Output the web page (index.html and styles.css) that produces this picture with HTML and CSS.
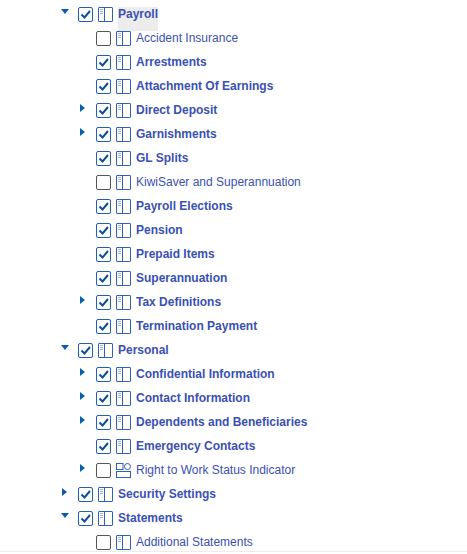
FILE: index.html
```html
<!DOCTYPE html>
<html lang="en">
<head>
<meta charset="utf-8">
<title>Payroll tree</title>
<link rel="stylesheet" href="styles.css">
</head>
<body>
<svg class="defs" width="0" height="0" aria-hidden="true">
  <symbol id="page" viewBox="0 0 15 15">
    <rect x=".5" y=".5" width="14" height="14" rx=".5" fill="#fff" stroke="#2f5fc0"/>
    <path d="M6.500 .5V14.500" fill="none" stroke="#2f5fc0"/>
    <path d="M2 2.500h3M2 4.500h3M2 6.500h3" fill="none" stroke="#9fb0e2"/>
  </symbol>
  <symbol id="shapes" viewBox="0 0 15 15">
    <rect x=".5" y=".5" width="6.500" height="6" fill="#fff" stroke="#2f5fc0"/>
    <circle cx="11.500" cy="3.500" r="3" fill="#fff" stroke="#2f5fc0"/>
    <rect x=".5" y="8.500" width="14" height="6" fill="#fff" stroke="#2f5fc0"/>
  </symbol>
  <symbol id="tick" viewBox="0 0 13 13">
    <path d="M2.500 6.500l3 3L11 3" fill="none" stroke="#0b4f9e" stroke-width="2"/>
  </symbol>
</svg>
<ul class="tree">
  <li class="row l0 open"><span class="tw"></span><span class="cb on"><svg><use href="#tick"/></svg></span><svg class="ic"><use href="#page"/></svg><span class="t b sel">Payroll</span></li>
  <li class="row l1"><span class="tw none"></span><span class="cb"></span><svg class="ic"><use href="#page"/></svg><span class="t">Accident Insurance</span></li>
  <li class="row l1"><span class="tw none"></span><span class="cb on"><svg><use href="#tick"/></svg></span><svg class="ic"><use href="#page"/></svg><span class="t b">Arrestments</span></li>
  <li class="row l1"><span class="tw none"></span><span class="cb on"><svg><use href="#tick"/></svg></span><svg class="ic"><use href="#page"/></svg><span class="t b">Attachment Of Earnings</span></li>
  <li class="row l1 closed"><span class="tw"></span><span class="cb on"><svg><use href="#tick"/></svg></span><svg class="ic"><use href="#page"/></svg><span class="t b">Direct Deposit</span></li>
  <li class="row l1 closed"><span class="tw"></span><span class="cb on"><svg><use href="#tick"/></svg></span><svg class="ic"><use href="#page"/></svg><span class="t b">Garnishments</span></li>
  <li class="row l1"><span class="tw none"></span><span class="cb on"><svg><use href="#tick"/></svg></span><svg class="ic"><use href="#page"/></svg><span class="t b">GL Splits</span></li>
  <li class="row l1"><span class="tw none"></span><span class="cb"></span><svg class="ic"><use href="#page"/></svg><span class="t">KiwiSaver and Superannuation</span></li>
  <li class="row l1"><span class="tw none"></span><span class="cb on"><svg><use href="#tick"/></svg></span><svg class="ic"><use href="#page"/></svg><span class="t b">Payroll Elections</span></li>
  <li class="row l1"><span class="tw none"></span><span class="cb on"><svg><use href="#tick"/></svg></span><svg class="ic"><use href="#page"/></svg><span class="t b">Pension</span></li>
  <li class="row l1"><span class="tw none"></span><span class="cb on"><svg><use href="#tick"/></svg></span><svg class="ic"><use href="#page"/></svg><span class="t b">Prepaid Items</span></li>
  <li class="row l1"><span class="tw none"></span><span class="cb on"><svg><use href="#tick"/></svg></span><svg class="ic"><use href="#page"/></svg><span class="t b">Superannuation</span></li>
  <li class="row l1 closed"><span class="tw"></span><span class="cb on"><svg><use href="#tick"/></svg></span><svg class="ic"><use href="#page"/></svg><span class="t b">Tax Definitions</span></li>
  <li class="row l1"><span class="tw none"></span><span class="cb on"><svg><use href="#tick"/></svg></span><svg class="ic"><use href="#page"/></svg><span class="t b">Termination Payment</span></li>
  <li class="row l0 open"><span class="tw"></span><span class="cb on"><svg><use href="#tick"/></svg></span><svg class="ic"><use href="#page"/></svg><span class="t b">Personal</span></li>
  <li class="row l1 closed"><span class="tw"></span><span class="cb on"><svg><use href="#tick"/></svg></span><svg class="ic"><use href="#page"/></svg><span class="t b">Confidential Information</span></li>
  <li class="row l1 closed"><span class="tw"></span><span class="cb on"><svg><use href="#tick"/></svg></span><svg class="ic"><use href="#page"/></svg><span class="t b">Contact Information</span></li>
  <li class="row l1 closed"><span class="tw"></span><span class="cb on"><svg><use href="#tick"/></svg></span><svg class="ic"><use href="#page"/></svg><span class="t b">Dependents and Beneficiaries</span></li>
  <li class="row l1"><span class="tw none"></span><span class="cb on"><svg><use href="#tick"/></svg></span><svg class="ic"><use href="#page"/></svg><span class="t b">Emergency Contacts</span></li>
  <li class="row l1 closed"><span class="tw"></span><span class="cb"></span><svg class="ic"><use href="#shapes"/></svg><span class="t">Right to Work Status Indicator</span></li>
  <li class="row l0 closed"><span class="tw"></span><span class="cb on"><svg><use href="#tick"/></svg></span><svg class="ic"><use href="#page"/></svg><span class="t b">Security Settings</span></li>
  <li class="row l0 open"><span class="tw"></span><span class="cb on"><svg><use href="#tick"/></svg></span><svg class="ic"><use href="#page"/></svg><span class="t b">Statements</span></li>
  <li class="row l1"><span class="tw none"></span><span class="cb"></span><svg class="ic"><use href="#page"/></svg><span class="t">Additional Statements</span></li>
</ul>
</body>
</html>
```
FILE: styles.css
```css
html, body {
  margin: 0;
  padding: 0;
  height: 100%;
  overflow: hidden;
  background: #fff;
}
.defs { display: block; height: 0; }
.tree {
  list-style: none;
  margin: 0;
  padding: 2px 0 0;
  height: 549px;
  overflow: hidden;
  border-bottom: 1px solid #ececec;
  font-family: "Liberation Sans", Arial, sans-serif;
  font-size: 12px;
  color: #3a50b4;
}
.row {
  display: flex;
  align-items: center;
  height: 24px;
}
.l0 { padding-left: 61px; }
.l1 { padding-left: 79px; }
.tw {
  flex: 0 0 17px;
  display: flex;
  justify-content: flex-start;
}
.open .tw::before {
  content: "";
  margin: -5px 0 0 0;
  border-style: solid;
  border-width: 5px 4px 0;
  border-color: #0b5cb0 transparent transparent;
}
.closed .tw::before {
  content: "";
  margin: -5px 0 0 1px;
  border-style: solid;
  border-width: 4px 0 4px 5px;
  border-color: transparent transparent transparent #0b5cb0;
}
.cb {
  flex: 0 0 auto;
  box-sizing: border-box;
  width: 15px;
  height: 15px;
  margin-top: 1px;
  border: 1px solid #555;
  border-radius: 2px;
  background: #fff;
  margin-right: 5px;
  display: block;
}
.cb.on { border-color: #1f5fb8; }
.cb svg { display: block; width: 13px; height: 13px; }
.ic {
  flex: 0 0 15px;
  width: 15px;
  height: 15px;
  margin-top: 1px;
  margin-right: 5px;
}
.t { white-space: nowrap; line-height: 24px; }
.b { font-weight: 700; }
.sel {
  align-self: flex-start;
  height: 29px;
  background: linear-gradient(#ececec, #ececec) no-repeat 0 5px / 100% 24px;
}
```
